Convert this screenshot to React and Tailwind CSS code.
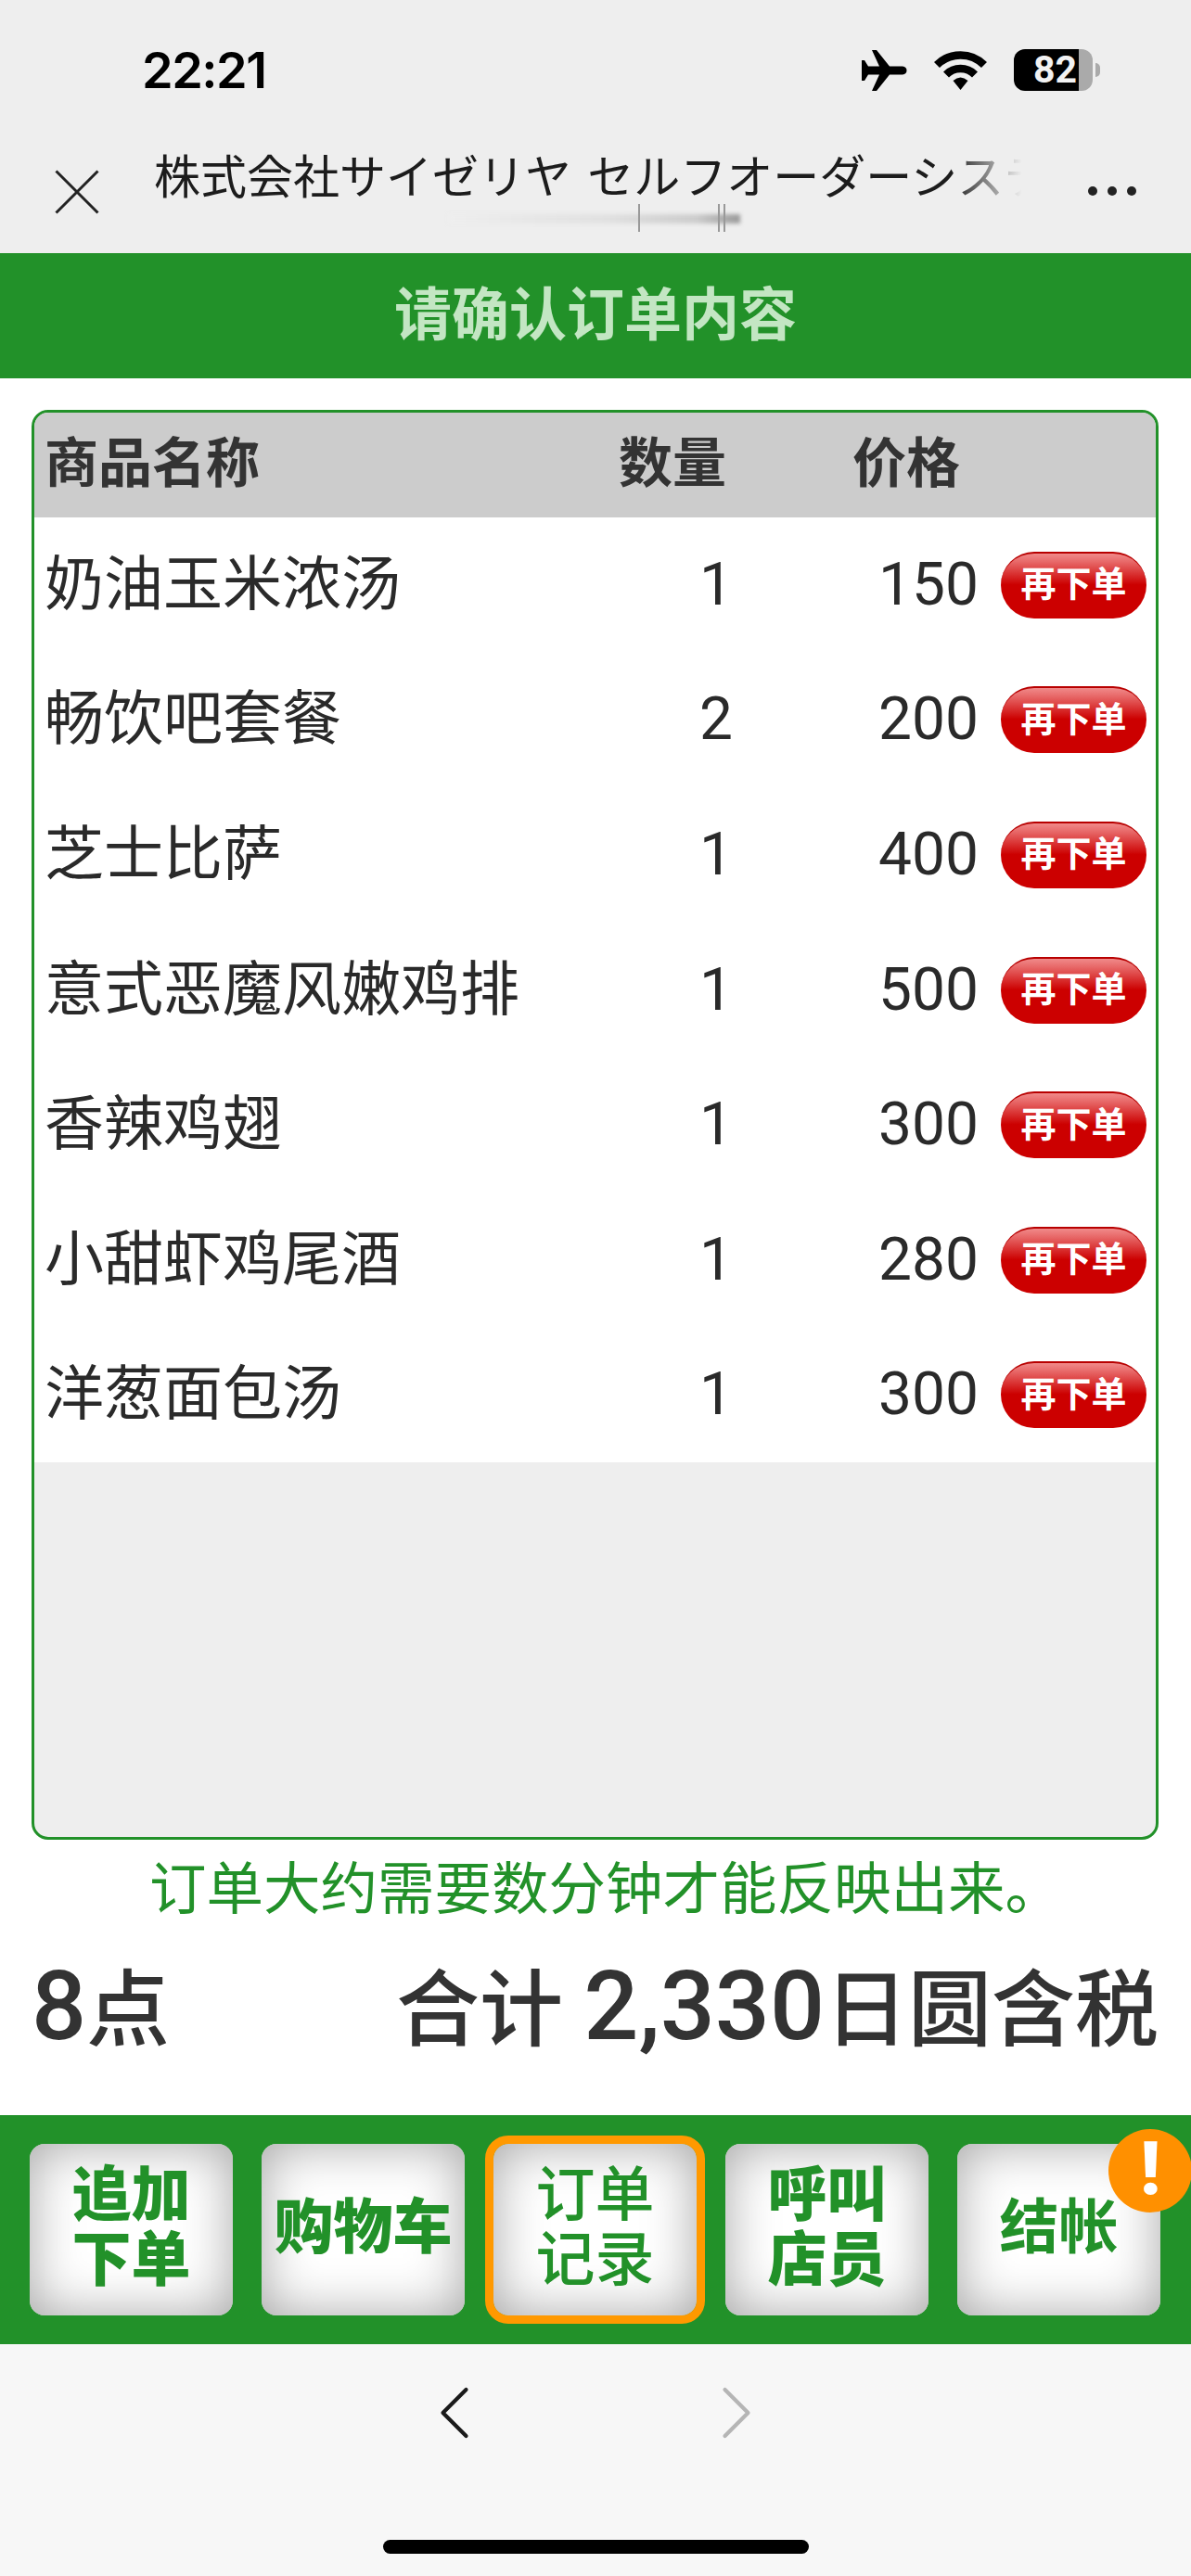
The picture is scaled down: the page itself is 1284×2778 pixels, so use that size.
import { ChevronLeft, ChevronRight, X } from "lucide-react";

const items = [
  { name: "奶油玉米浓汤", qty: 1, price: 150 },
  { name: "畅饮吧套餐", qty: 2, price: 200 },
  { name: "芝士比萨", qty: 1, price: 400 },
  { name: "意式恶魔风嫩鸡排", qty: 1, price: 500 },
  { name: "香辣鸡翅", qty: 1, price: 300 },
  { name: "小甜虾鸡尾酒", qty: 1, price: 280 },
  { name: "洋葱面包汤", qty: 1, price: 300 },
];

const navButtons = [
  { id: "add", lines: ["追加", "下单"], weight: "font-black" },
  { id: "cart", lines: ["购物车"], weight: "font-black" },
  { id: "history", lines: ["订单", "记录"], weight: "font-medium", active: true },
  { id: "call", lines: ["呼叫", "店员"], weight: "font-black" },
  { id: "pay", lines: ["结帐"], weight: "font-bold", alert: true },
];

const Airplane = () => (
  <svg width="49" height="44" viewBox="0 0 49 44" fill="black">
    <path d="M44 17.5H30L16 0H11L19 17.5H7L3 11H0V33H3L7 26.5H19L11 44H16L30 26.5H44C50 26.5 50 17.5 44 17.5Z" />
  </svg>
);

const Wifi = () => (
  <svg width="57" height="42" viewBox="0 0 57 42" fill="none" stroke="black" strokeWidth="8.5">
    <path d="M3 15A36 36 0 0 1 54 15" />
    <path d="M13 25.5A22 22 0 0 1 44 25.5" />
    <path d="M20.5 32Q28.5 25 36.500 32L28.500 42Z" fill="black" stroke="none" />
  </svg>
);

const Battery = () => (
  <div className="flex items-center">
    <div className="flex h-[45px] w-[85px]">
      <div className="flex w-[70px] items-center justify-end rounded-l-[12px] bg-black pr-[2px]">
        <span className="text-[41px] leading-[45px] font-bold text-[#f2f2f2]">82</span>
      </div>
      <div className="w-[15px] rounded-r-[12px] bg-[#aaaaaa]" />
    </div>
    <div className="ml-[3px] h-[15px] w-[5px] rounded-r-full bg-[#aaaaaa]" />
  </div>
);

const ReorderButton = () => (
  <button className="h-[72px] w-[157px] rounded-full border-t-2 border-[#b80000] bg-[linear-gradient(#f08a8a_0%,#e86a6a_12%,#cc0000_48%,#cc0000_100%)] pb-[3px] text-[38px] leading-none font-bold text-white">
    再下单
  </button>
);

export default function App() {
  return (
    <div className="flex h-[2778px] w-[1284px] flex-col overflow-hidden bg-white font-['Roboto','Noto_Sans_CJK_SC',sans-serif] text-[#333333]">
      {/* browser chrome */}
      <div className="flex h-[273px] flex-col bg-[#eeeeee]">
        <div className="flex h-[150px] items-start justify-between pt-[53px] pr-[98px] pl-[153px]">
          <span className="font-['Inter',sans-serif] text-[54px] leading-[46px] font-semibold tracking-[-1.500px] text-black">22:21</span>
          <div className="flex items-center gap-[29px]">
            <Airplane />
            <Wifi />
            <Battery />
          </div>
        </div>
        <div className="relative flex flex-1 items-start">
          <X className="mt-[12px] ml-[38px] h-[90px] w-[90px] shrink-0 text-[#222222]" strokeWidth={0.800} strokeLinecap="butt" />
          <div className="relative mt-[9px] ml-[38px] w-[949px] overflow-hidden font-['Noto_Sans_CJK_JP',sans-serif] text-[50px] leading-[56px] [word-spacing:6px] whitespace-nowrap text-[#1c1c1c]">
            株式会社サイゼリヤ セルフオーダーシステム
            <div className="absolute inset-y-0 right-0 w-[90px] bg-[linear-gradient(to_right,#eeeeee00,#eeeeee_85%)]" />
          </div>
          <div className="mt-[51px] ml-[58px] flex gap-[11px]">
            <div className="h-[10px] w-[10px] rounded-full bg-[#222222]" />
            <div className="h-[10px] w-[10px] rounded-full bg-[#222222]" />
            <div className="h-[10px] w-[10px] rounded-full bg-[#222222]" />
          </div>
          {/* blurred subtitle */}
          <div className="absolute top-[70px] left-[483px] h-[30px] w-[315px]">
            <div className="absolute top-[11px] left-0 h-[10px] w-full bg-[linear-gradient(to_right,#eeeeee,#e0e0e0_55%,#cccccc_85%,#999999)] blur-[2px]" />
            <div className="absolute top-0 left-[205px] h-[30px] w-[2px] bg-[#999999]" />
            <div className="absolute top-0 left-[291px] h-[30px] w-[2px] bg-[#999999]" />
            <div className="absolute top-0 left-[297px] h-[30px] w-[2px] bg-[#999999]" />
          </div>
        </div>
      </div>

      <div className="flex h-[135px] items-center justify-center bg-[#229129] text-[62px] font-bold text-[#c3e6c3]">
        请确认订单内容
      </div>

      <div className="flex flex-1 flex-col pt-[34px] pr-[35px] pl-[34px]">
        {/* order table */}
        <div className="flex h-[1542px] flex-col overflow-hidden rounded-[18px] border-[3px] border-[#229129] bg-[#eeeeee]">
          <div className="flex h-[113px] shrink-0 items-center bg-[#cccccc] pb-[2px] pl-[11px] text-[58px] font-bold">
            <span className="w-[619px]">商品名称</span>
            <span className="w-[252px]">数量</span>
            <span>价格</span>
          </div>
          {items.map((item) => (
            <div key={item.name} className="flex h-[145.600px] shrink-0 items-center bg-white pl-[11px] text-[64px] text-[#2a2a2a]">
              <span className="w-[706px]">{item.name}</span>
              <span className="w-[100px]">{item.qty}</span>
              <span className="w-[201px] text-right">{item.price}</span>
              <div className="ml-[24px] flex">
                <ReorderButton />
              </div>
            </div>
          ))}
        </div>

        <p className="mt-[21px] pl-[23px] text-center text-[61.500px] leading-[66px] text-[#229129]">订单大约需要数分钟才能反映出来。</p>

        <div className="mt-[38px] flex items-baseline justify-between text-[90px] leading-[110px] font-medium">
          <span>
            <span className="text-[104px]">8</span>点
          </span>
          <span>
            合计 <span className="text-[104px]">2,330</span>日圆含税
          </span>
        </div>
      </div>

      {/* action bar */}
      <div className="flex h-[247px] shrink-0 items-center gap-[31px] bg-[#229129] pl-[32px]">
        {navButtons.map((btn) => (
          <div key={btn.id} className="relative">
            <button
              className={`flex h-[185px] w-[219px] flex-col items-center justify-center rounded-[16px] bg-white pb-[3px] text-[64px] leading-[70px] text-[#229129] shadow-[inset_0_0_56px_#a4a4a4] ${btn.weight} ${
                btn.active ? "outline-[9px] outline-[#ff9900]" : ""
              }`}
            >
              {btn.lines.map((line) => (
                <span key={line}>{line}</span>
              ))}
            </button>
            {btn.alert && (
              <div className="absolute -top-[16px] -right-[34px] flex h-[90px] w-[90px] items-center justify-center rounded-full bg-[#ff9000] pb-[4px] text-[80px] leading-none font-black text-white">
                !
              </div>
            )}
          </div>
        ))}
      </div>

      {/* browser bottom bar */}
      <div className="flex h-[250px] shrink-0 flex-col items-center bg-[#f7f7f7]">
        <div className="mt-[24px] flex gap-[204px]">
          <ChevronLeft className="h-[100px] w-[100px] text-[#1a1a1a]" strokeWidth={1} />
          <ChevronRight className="h-[100px] w-[100px] text-[#b5b5b5]" strokeWidth={1} />
        </div>
        <div className="mt-[87px] h-[15px] w-[459px] rounded-full bg-black" />
      </div>
    </div>
  );
}
